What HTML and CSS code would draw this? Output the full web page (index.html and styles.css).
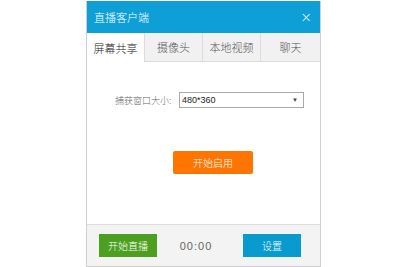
FILE: index.html
```html
<!DOCTYPE html>
<html>
<head>
<meta charset="utf-8">
<link rel="stylesheet" href="styles.css">
</head>
<body>
<div class="dialog">
  <div class="title">
    <span class="title-text">直播客户端</span>
    <span class="close">×</span>
  </div>
  <div class="tabs">
    <div class="tab active">屏幕共享</div>
    <div class="tab">摄像头</div>
    <div class="tab">本地视频</div>
    <div class="tab last">聊天</div>
  </div>
  <div class="content">
    <div class="row">
      <span class="label">捕获窗口大小:</span>
      <div class="select"><span>480*360</span><span class="arrow">▼</span></div>
    </div>
    <div class="start-row">
      <div class="btn orange">开始启用</div>
    </div>
  </div>
  <div class="footer">
    <div class="btn green">开始直播</div>
    <span class="time">00:00</span>
    <div class="btn blue">设置</div>
  </div>
</div>
</body>
</html>
```
FILE: styles.css
```css
html, body { margin: 0; padding: 0; background: #fff; }
body {
  font-family: "Noto Sans CJK SC", "Noto Sans", sans-serif;
  width: 400px; height: 267px; overflow: hidden;
}
.dialog {
  margin-left: 86px;
  width: 233px;
  border: 1px solid #cfcfcf;
  border-top: none;
  display: flex;
  flex-direction: column;
  margin-top: 1px;
}
.title {
  height: 32px;
  background: #0d9fd6;
  color: #fff;
  display: flex;
  align-items: center;
  justify-content: space-between;
  padding: 0 8px 0 7px;
}
.title-text { font-size: 11px; line-height: 1; font-weight: 300; }
.close { font-size: 14px; line-height: 1; font-family: "DejaVu Sans", sans-serif; font-weight: 300; }
.tabs {
  display: flex;
  height: 29px;
}
.tab {
  background: #f1f1f1;
  border-bottom: 1px solid #dcdcdc;
  border-left: 1px solid #dcdcdc;
  box-sizing: border-box;
  display: flex;
  align-items: center;
  justify-content: center;
  font-size: 11px;
  font-weight: 300;
  color: #555;
  width: 58px;
}
.tab.active {
  background: #fff;
  border: none;
  color: #222;
  width: 57px;
}
.tab.last { width: 60px; }
.content {
  height: 162px;
  background: #fff;
  display: flex;
  flex-direction: column;
}
.row {
  display: flex;
  align-items: center;
  margin-top: 30px;
  padding-left: 28px;
}
.label { font-size: 9px; color: #666; width: 64px; font-weight: 300; }
.select {
  width: 119px;
  height: 14px;
  border: 1px solid #a9a9a9;
  display: flex;
  align-items: center;
  justify-content: space-between;
  padding: 0 2px 0 2px;
  font-size: 9px;
  color: #222;
  font-family: "Liberation Sans", sans-serif;
}
.arrow { font-size: 6px; color: #444; margin-right: 3px; }
.start-row {
  display: flex;
  justify-content: center;
  margin-top: 43px;
  padding-left: 19px;
}
.btn {
  height: 23px;
  display: flex;
  align-items: center;
  justify-content: center;
  color: #fff;
  font-size: 10px;
  font-weight: 300;
}
.orange { width: 80px; background: #ff7500; border-radius: 2px; }
.footer {
  height: 42px;
  background: #f3f3f3;
  border-top: 1px solid #dedede;
  box-sizing: border-box;
  display: flex;
  align-items: center;
  padding: 0 19px 0 12px;
  justify-content: space-between;
}
.green { width: 58px; background: #4d9f20; }
.blue { width: 58px; background: #079bd0; }
.time { font-size: 11px; color: #666; font-family: "Liberation Sans", sans-serif; letter-spacing: 1px; margin-right: 8px; }
```
